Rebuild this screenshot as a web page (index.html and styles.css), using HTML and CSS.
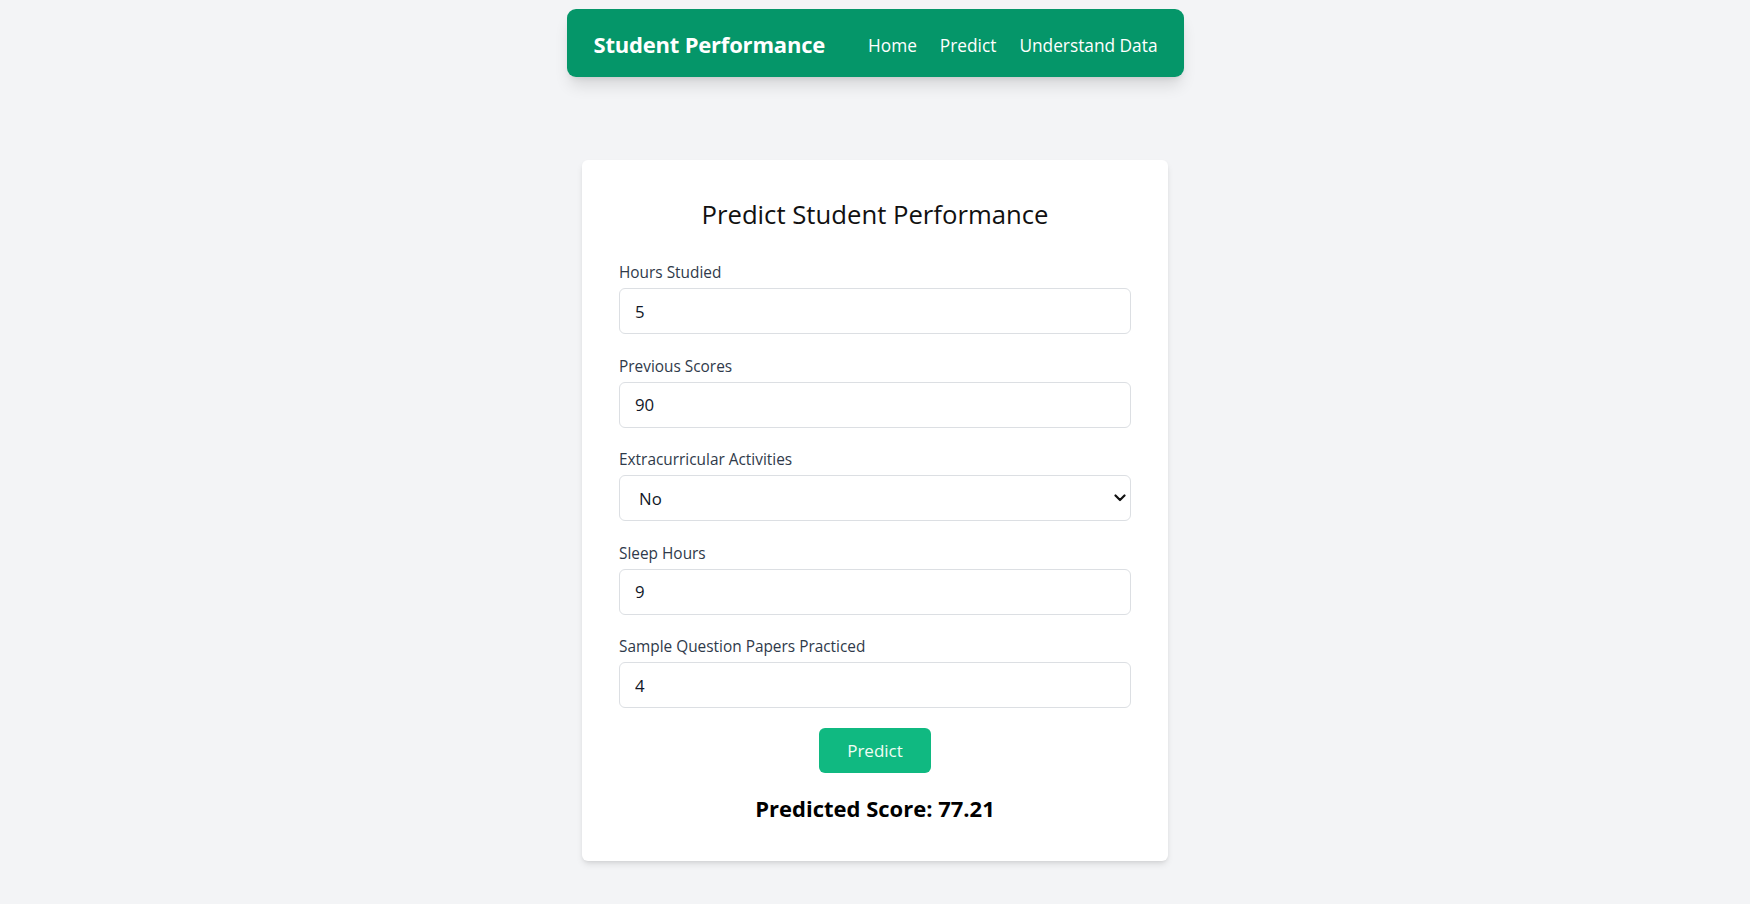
FILE: index.html
```html
<!DOCTYPE html>
<html lang="en">
<head>
<meta charset="utf-8">
<title>Student Performance</title>
<link rel="stylesheet" href="styles.css">
</head>
<body>
<nav class="navbar">
  <a class="brand" href="#">Student Performance</a>
  <div class="nav-links">
    <a href="#">Home</a>
    <a href="#">Predict</a>
    <a href="#">Understand Data</a>
  </div>
</nav>

<main class="card">
  <h1 class="title">Predict Student Performance</h1>
  <form class="form">
    <div class="field">
      <label class="label" for="hours">Hours Studied</label>
      <input class="input" id="hours" type="text" value="5">
    </div>
    <div class="field">
      <label class="label" for="prev">Previous Scores</label>
      <input class="input" id="prev" type="text" value="90">
    </div>
    <div class="field">
      <label class="label" for="extra">Extracurricular Activities</label>
      <div class="select-wrap">
        <select class="input select" id="extra">
          <option>No</option>
          <option>Yes</option>
        </select>
        <svg class="chevron" width="12" height="8" viewBox="0 0 12 8"><path d="M1.5 1.5 L6 6 L10.5 1.5" fill="none" stroke="#111" stroke-width="2.2" stroke-linecap="round" stroke-linejoin="round"/></svg>
      </div>
    </div>
    <div class="field">
      <label class="label" for="sleep">Sleep Hours</label>
      <input class="input" id="sleep" type="text" value="9">
    </div>
    <div class="field">
      <label class="label" for="papers">Sample Question Papers Practiced</label>
      <input class="input" id="papers" type="text" value="4">
    </div>
    <div class="actions">
      <button class="btn" type="button">Predict</button>
    </div>
  </form>
  <p class="result">Predicted Score: 77.21</p>
</main>
</body>
</html>
```

FILE: styles.css
```css
* { box-sizing: border-box; }

html, body {
  margin: 0;
  padding: 0;
}

body {
  background: #f3f4f6;
  font-family: "Open Sans", "Noto Sans", "Liberation Sans", sans-serif;
  color: #111827;
  height: 904px;
  overflow: hidden;
}

.navbar {
  width: 617px;
  height: 68px;
  margin: 9px auto 0;
  background: #059669;
  border-radius: 9px;
  display: flex;
  align-items: center;
  justify-content: space-between;
  padding: 0 26px 0 27px;
  box-shadow: 0 11px 16px -3px rgba(0,0,0,0.12), 0 4px 7px -4px rgba(0,0,0,0.12);
}

.brand {
  color: #ffffff;
  text-decoration: none;
  font-weight: 700;
  font-size: 22px;
  letter-spacing: -0.2px;
  margin-top: 2px;
}

.nav-links {
  display: flex;
  gap: 23px;
  margin-top: 5px;
}

.nav-links a {
  color: #ffffff;
  text-decoration: none;
  font-size: 17.3px;
}

.card {
  width: 586px;
  margin: 83px auto 0;
  background: #ffffff;
  border-radius: 6px;
  padding: 37px;
  box-shadow: 0 4px 7px -1px rgba(0,0,0,0.1), 0 2px 4px -2px rgba(0,0,0,0.1);
}

.title {
  margin: 0 0 29px;
  text-align: center;
  font-weight: 400;
  font-size: 25.7px;
  line-height: 36px;
  color: #111111;
}

.form {
  margin: 0;
}

.field {
  margin-bottom: 21.5px;
}

.label {
  display: block;
  font-size: 15.4px;
  line-height: 22px;
  color: #2f3a4a;
  margin-bottom: 4px;
}

.input {
  display: block;
  width: 100%;
  height: 46px;
  border: 1px solid #dcdfe3;
  border-radius: 6px;
  padding: 0 15px;
  font-family: inherit;
  font-size: 16.8px;
  color: #111827;
  background: #ffffff;
  outline: none;
}

.select-wrap {
  position: relative;
}

.select {
  appearance: none;
  -webkit-appearance: none;
  padding-left: 19px;
}

.chevron {
  position: absolute;
  right: 5px;
  top: 19px;
  pointer-events: none;
}

.actions {
  display: flex;
  justify-content: center;
  margin-top: -2px;
}

.btn {
  width: 112px;
  height: 45px;
  border: none;
  border-radius: 6px;
  background: #10b981;
  color: #f0fdf4;
  font-family: inherit;
  font-size: 17px;
  cursor: pointer;
}

.result {
  margin: 20px 0 0;
  text-align: center;
  font-weight: 700;
  font-size: 22px;
  line-height: 31px;
  color: #000000;
}
```
